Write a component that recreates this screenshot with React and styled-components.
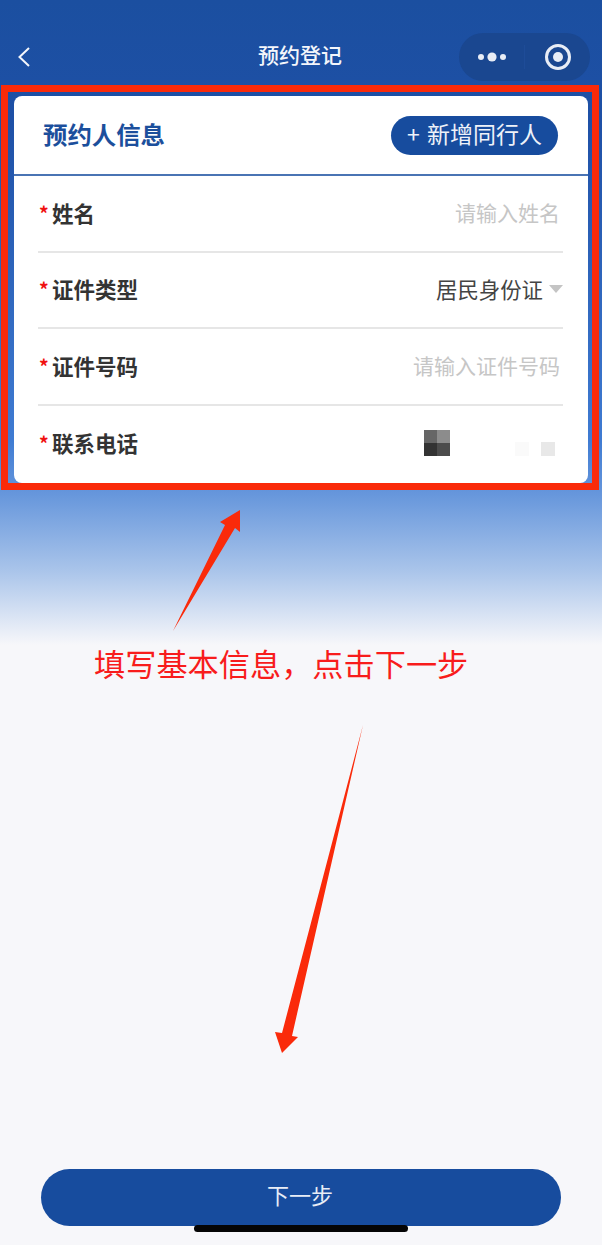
import React from "react";
import styled, { createGlobalStyle } from "styled-components";

const GlobalStyle = createGlobalStyle`
  html, body { margin: 0; padding: 0; }
  body { font-family: "Noto Sans CJK SC", "Noto Sans", sans-serif; background: #f7f7fa; }
  * { box-sizing: border-box; }
`;

const Page = styled.div`
  position: relative;
  width: 602px;
  height: 1245px;
  overflow: hidden;
  display: flex;
  flex-direction: column;
  background: linear-gradient(
    180deg,
    #1b4fa0 0,
    #1e50a6 120px,
    #3f7bd2 440px,
    #6797dc 495px,
    #a9c4ea 570px,
    #f7f7fa 645px
  );
`;

const NavBar = styled.header`
  height: 85px;
  flex: none;
  padding: 33px 12px 4px 17px;
  display: grid;
  grid-template-columns: 131px 1fr 131px;
  align-items: center;
`;

const BackButton = styled.button`
  padding: 0;
  border: 0;
  background: none;
  width: 14px;
  height: 22px;
  display: block;
`;

const NavTitle = styled.h1`
  margin: 0 0 0 -7px;
  padding-bottom: 6px;
  text-align: center;
  color: #f4f6fb;
  font-size: 21px;
  font-weight: 500;
  line-height: 42px;
`;

const Capsule = styled.div`
  height: 48px;
  border-radius: 24px;
  background: #1a4790;
  display: flex;
  align-items: center;
`;

const CapsuleSlot = styled.div`
  flex: 1;
  height: 24px;
  display: flex;
  align-items: center;
  justify-content: center;
  border-left: ${(p) => (p.$divided ? "1px solid #1e4c98" : "0")};
`;

const Frame = styled.section`
  margin: 0 3px 0 1px;
  height: 405px;
  flex: none;
  border: 7px solid #fa2a0a;
  padding: 4px 4px 0 6px;
`;

const Card = styled.div`
  height: 387px;
  background: #fff;
  border-radius: 8px;
  overflow: hidden;
`;

const CardHead = styled.div`
  height: 80px;
  padding: 1px 30px 0 29px;
  display: flex;
  align-items: center;
  justify-content: space-between;
  border-bottom: 2px solid #4a74b4;
`;

const CardTitle = styled.h2`
  margin: 0;
  padding-bottom: 4px;
  color: #1c4f9c;
  font-size: 24.4px;
  font-weight: 700;
`;

const AddButton = styled.button`
  width: 167px;
  height: 39px;
  border: 0;
  border-radius: 20px;
  padding: 0 0 5px;
  background: #174c9e;
  color: #eef2f9;
  font: 400 23px "Noto Sans CJK SC", sans-serif;
  word-spacing: 2px;
`;

const Rows = styled.div`
  padding: 0 25px 0 24px;
`;

const Row = styled.div`
  height: 76.5px;
  padding-bottom: 2px;
  display: flex;
  align-items: center;
  justify-content: space-between;
  border-bottom: ${(p) => (p.$last ? "0" : "2px solid #e6e6e6")};
`;

const Label = styled.div`
  position: relative;
  padding-left: 14px;
  color: #333;
  font-size: 21.5px;
  font-weight: 700;
  &::before {
    content: "*";
    position: absolute;
    left: 1px;
    top: 2px;
    color: #f01010;
    font-size: 19px;
    font-weight: 700;
  }
`;

const Placeholder = styled.div`
  padding-right: 3px;
  color: #c6c6c6;
  font-size: 21px;
`;

const SelectValue = styled.div`
  display: flex;
  align-items: center;
  gap: 6px;
  color: #444;
  font-size: 21.4px;
  &::after {
    content: "";
    border-style: solid;
    border-width: 8px 7px 0;
    border-color: #c4c4c4 transparent transparent;
  }
`;

const Masked = styled.div`
  width: 131px;
  height: 26px;
  margin: 0 8px 0 0;
  display: flex;
  justify-content: space-between;
`;

const Mosaic = styled.div`
  width: 26px;
  height: 26px;
  display: grid;
  grid-template-columns: 1fr 1fr;
`;

const Cell = styled.span`
  background: ${(p) => p.$c};
`;

const Faint = styled.div`
  align-self: flex-end;
  width: 14px;
  height: 14px;
  background: #e8e8e8;
  box-shadow: -26px 0 0 #fafafa;
`;

const Note = styled.p`
  margin: 153px 0 0 94px;
  color: #f81c1c;
  font-size: 31.2px;
  font-weight: 400;
  line-height: 40px;
  white-space: nowrap;
`;

const Arrow = styled.svg`
  position: absolute;
  left: 0;
  top: 0;
  pointer-events: none;
`;

const NextButton = styled.button`
  margin: auto 41px 19px;
  height: 57px;
  flex: none;
  border: 0;
  border-radius: 29px;
  padding: 0 2px 8px 0;
  background: #174c9e;
  color: #e8edf6;
  font: 400 22px "Noto Sans CJK SC", sans-serif;
`;

const HomeBar = styled.div`
  position: absolute;
  left: 194px;
  bottom: 13px;
  width: 214px;
  height: 7px;
  border-radius: 4px;
  background: #050505;
`;

const rows = [
  { label: "姓名", placeholder: "请输入姓名" },
  { label: "证件类型", select: "居民身份证" },
  { label: "证件号码", placeholder: "请输入证件号码" },
];

export default function App() {
  return (
    <Page>
      <GlobalStyle />
      <NavBar>
        <BackButton aria-label="返回">
          <svg width="14" height="22" viewBox="0 0 14 22" fill="none">
            <path d="M12 2 L2.5 11 L12 20" stroke="#f4f6fb" strokeWidth="2" />
          </svg>
        </BackButton>
        <NavTitle>预约登记</NavTitle>
        <Capsule>
          <CapsuleSlot>
            <svg width="30" height="12" viewBox="0 0 30 12" fill="#e8edf6">
              <circle cx="4" cy="6" r="3" />
              <circle cx="15" cy="6" r="4.6" />
              <circle cx="26" cy="6" r="3" />
            </svg>
          </CapsuleSlot>
          <CapsuleSlot $divided>
            <svg width="28" height="28" viewBox="0 0 28 28" fill="none">
              <circle cx="14" cy="14" r="11.5" stroke="#e8edf6" strokeWidth="3" />
              <circle cx="14" cy="14" r="5" fill="#e8edf6" />
            </svg>
          </CapsuleSlot>
        </Capsule>
      </NavBar>

      <Frame>
        <Card>
          <CardHead>
            <CardTitle>预约人信息</CardTitle>
            <AddButton>+ 新增同行人</AddButton>
          </CardHead>
          <Rows>
            {rows.map((r) => (
              <Row key={r.label}>
                <Label>{r.label}</Label>
                {r.select ? (
                  <SelectValue>{r.select}</SelectValue>
                ) : (
                  <Placeholder>{r.placeholder}</Placeholder>
                )}
              </Row>
            ))}
            <Row $last>
              <Label>联系电话</Label>
              <Masked>
                <Mosaic>
                  <Cell $c="#666" />
                  <Cell $c="#8c8c8c" />
                  <Cell $c="#333" />
                  <Cell $c="#4c4c4c" />
                </Mosaic>
                <Faint />
              </Masked>
            </Row>
          </Rows>
        </Card>
      </Frame>

      <Note>填写基本信息，点击下一步</Note>

      <Arrow width="602" height="1245" viewBox="0 0 602 1245">
        <polygon
          fill="#fa2a0a"
          points="173,631 225,525 220,522 240,510 240,532 235,528"
        />
        <polygon
          fill="#fa2a0a"
          points="363,725 292,1036 298,1037 282,1053 275,1032 282,1033"
        />
      </Arrow>

      <NextButton>下一步</NextButton>
      <HomeBar />
    </Page>
  );
}
